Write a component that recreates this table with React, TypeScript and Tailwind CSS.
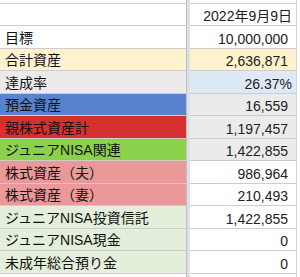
import React from "react";

type Row = {
  label: string;
  leftBg: string;
  value: string;
  rightBg: string;
  tight?: boolean;
};

const rows: Row[] = [
  { label: "", leftBg: "bg-white", value: "2022年9月9日", rightBg: "bg-white", tight: true },
  { label: "目標", leftBg: "bg-white", value: "10,000,000", rightBg: "bg-white" },
  { label: "合計資産", leftBg: "bg-[#fff2cc]", value: "2,636,871", rightBg: "bg-[#fff2cc]" },
  { label: "達成率", leftBg: "bg-[#ebebeb]", value: "26.37%", rightBg: "bg-[#dee9f6]", tight: true },
  { label: "預金資産", leftBg: "bg-[#5882cf]", value: "16,559", rightBg: "bg-[#ebebeb]" },
  { label: "親株式資産計", leftBg: "bg-[#d73030]", value: "1,197,457", rightBg: "bg-[#ebebeb]" },
  { label: "ジュニアNISA関連", leftBg: "bg-[#8cd14c]", value: "1,422,855", rightBg: "bg-[#ebebeb]" },
  { label: "株式資産（夫）", leftBg: "bg-[#ea9999]", value: "986,964", rightBg: "bg-white" },
  { label: "株式資産（妻）", leftBg: "bg-[#ea9999]", value: "210,493", rightBg: "bg-white" },
  { label: "ジュニアNISA投資信託", leftBg: "bg-[#e3efda]", value: "1,422,855", rightBg: "bg-white" },
  { label: "ジュニアNISA現金", leftBg: "bg-[#e3efda]", value: "0", rightBg: "bg-white" },
  { label: "未成年総合預り金", leftBg: "bg-[#e3efda]", value: "0", rightBg: "bg-white" },
];

const font = { fontFamily: '"Liberation Sans", "Noto Sans CJK JP", Arial, sans-serif' };

export default function App() {
  return (
    <div
      className="flex h-[277px] w-[300px] overflow-hidden bg-white text-[14px] leading-[18px]"
      style={font}
    >
      {/* left column */}
      <div className="flex w-[187px] shrink-0 flex-col border-r border-[#bfbfbf]">
        <div className="h-[3px] shrink-0 bg-white" />
        {rows.map((r, i) => (
          <div
            key={i}
            className={`flex shrink-0 items-end overflow-hidden whitespace-nowrap border-t border-[#cdcdcd] pb-[1px] pl-[5px] text-[#111] ${r.leftBg} ${
              i % 2 === 0 ? "h-[22px]" : "h-[23px]"
            }`}
          >
            {r.label}
          </div>
        ))}
        <div className="flex-1 border-t border-[#cdcdcd] bg-white" />
      </div>
      {/* frozen divider */}
      <div className="w-[3px] shrink-0 bg-[#dce0e8]" />
      {/* right column */}
      <div className="flex w-[107px] shrink-0 flex-col border-r border-[#d4d4d4]">
        <div className="h-[3px] shrink-0 bg-white" />
        {rows.map((r, i) => (
          <div
            key={i}
            className={`flex shrink-0 items-end justify-end overflow-hidden whitespace-nowrap border-t border-[#cdcdcd] text-[#222] ${r.rightBg} ${
              i % 2 === 0 ? "h-[22px]" : "h-[23px]"
            } ${r.tight ? "pr-[4px]" : "pr-[8px]"}`}
          >
            {r.value}
          </div>
        ))}
        <div className="flex-1 border-t border-[#cdcdcd] bg-white" />
      </div>
      <div className="flex-1 bg-white" />
    </div>
  );
}
